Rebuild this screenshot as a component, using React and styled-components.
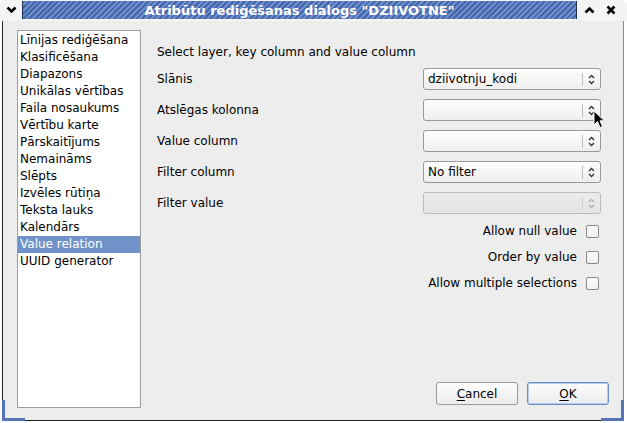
import React from "react";
import styled, { createGlobalStyle } from "styled-components";

const GlobalStyle = createGlobalStyle`
  html, body {
    margin: 0;
    padding: 0;
    background: #ffffff;
  }
  body {
    font-family: "DejaVu Sans", "Noto Sans", sans-serif;
    font-size: 12px;
    color: #000;
  }
`;

const Window = styled.div`
  width: 627px;
  height: 423px;
  display: flex;
  flex-direction: column;
  box-sizing: border-box;
  position: relative;
  overflow: hidden;
`;

const TitleBar = styled.div`
  height: 21px;
  display: flex;
  align-items: stretch;
  background: #f4f4f4;
  border-radius: 5px 5px 0 0;
  padding: 1px 7px 2px 0;
  box-sizing: border-box;
`;

const TitleButton = styled.div`
  width: ${({ $w }) => $w || 22}px;
  display: flex;
  align-items: center;
  justify-content: center;
`;

const Title = styled.div`
  flex: 1;
  display: flex;
  align-items: center;
  justify-content: center;
  color: #fff;
  font-weight: bold;
  font-size: 13px;
  background: repeating-linear-gradient(
    135deg,
    #4466aa 0px,
    #4466aa 2px,
    #6f8fcc 2px,
    #6f8fcc 4px
  );
  border-left: 1px solid #1e2f55;
  border-right: 1px solid #1e2f55;
`;

const Frame = styled.div`
  flex: 1;
  display: flex;
  margin: 0 3px 2px 2px;
  padding: 9px 14px 12px 14px;
  background: #ededed;
  border-left: 1px solid #202020;
  border-right: 1px solid #8c8c8c;
  border-bottom: 1px solid #202020;
  position: relative;

  &::before,
  &::after {
    content: "";
    position: absolute;
    bottom: -1px;
    width: 20px;
    height: 18px;
    border-bottom: 3px solid #5575b8;
  }
  &::before {
    left: -1px;
    border-left: 3px solid #5575b8;
  }
  &::after {
    right: -1px;
    border-right: 3px solid #5575b8;
  }
`;

const ListBox = styled.div`
  width: 124px;
  box-sizing: border-box;
  background: #fff;
  border: 1px solid #9c9c9c;
  padding-top: 1px;
`;

const ListItem = styled.div`
  height: 17px;
  line-height: 17px;
  padding-left: 2px;
  white-space: nowrap;
  background: ${({ $active }) => ($active ? "#7094c9" : "transparent")};
  color: ${({ $active }) => ($active ? "#fff" : "#000")};
`;

const Panel = styled.div`
  flex: 1;
  display: flex;
  flex-direction: column;
  padding: 0 0 3px 16px;
`;

const Form = styled.div`
  display: flex;
  flex-direction: column;
  padding-right: 8px;
`;

const Header = styled.div`
  margin-top: 14px;
  line-height: 17px;
`;

const Grid = styled.div`
  margin-top: 7px;
  display: grid;
  grid-template-columns: 1fr 178px;
  grid-auto-rows: 22px;
  row-gap: 9px;
  align-items: center;
`;

const Label = styled.div`
  color: #000;
`;

const Combo = styled.div`
  position: relative;
  height: 22px;
  box-sizing: border-box;
  display: flex;
  align-items: center;
  border: 1px solid ${({ $disabled }) => ($disabled ? "#bdbdbd" : "#999")};
  border-radius: 3px;
  background: ${({ $disabled }) =>
    $disabled
      ? "linear-gradient(#ececec, #e4e4e4)"
      : "linear-gradient(#fefefe, #eeeeee)"};
`;

const ComboText = styled.div`
  flex: 1;
  padding-left: 4px;
`;

const ComboArrows = styled.div`
  width: 17px;
  height: 13px;
  border-left: 1px solid ${({ $disabled }) => ($disabled ? "#d0d0d0" : "#bdbdbd")};
  display: flex;
  align-items: center;
  justify-content: center;
`;

const Pointer = styled.svg`
  position: absolute;
  left: 169px;
  top: 10px;
`;

const Checks = styled.div`
  margin-top: 4px;
  padding-right: 2px;
  display: flex;
  flex-direction: column;
`;

const CheckRow = styled.div`
  height: 26px;
  display: flex;
  align-items: center;
  justify-content: flex-end;
  gap: 9px;
`;

const CheckBox = styled.div`
  width: 13px;
  height: 13px;
  box-sizing: border-box;
  border: 1px solid #8a8a8a;
  border-radius: 2px;
  background: linear-gradient(#fafafa, #f0f0f0);
`;

const Buttons = styled.div`
  margin-top: auto;
  display: flex;
  justify-content: flex-end;
  gap: 9px;
`;

const Button = styled.div`
  width: 82px;
  height: 23px;
  box-sizing: border-box;
  display: flex;
  align-items: center;
  justify-content: center;
  border-radius: 3px;
  border: 1px solid ${({ $primary }) => ($primary ? "#6d8ec6" : "#9a9a9a")};
  box-shadow: ${({ $primary }) => ($primary ? "inset 0 0 0 1px #b7c9e8" : "none")};
  background: linear-gradient(#fdfdfd, #ececec);

  u {
    text-decoration: underline;
    text-underline-offset: 2px;
  }
`;

const Arrows = ({ color }) => (
  <svg width="7" height="11" viewBox="0 0 7 11">
    <path d="M1 4 L3.5 1.5 L6 4 M1 7 L3.5 9.5 L6 7" fill="none" stroke={color} strokeWidth="1.3" />
  </svg>
);

function ComboBox({ value, disabled, pointer }) {
  const color = disabled ? "#b0b0b0" : "#333";
  return (
    <Combo $disabled={disabled}>
      <ComboText>{value}</ComboText>
      <ComboArrows $disabled={disabled}>
        <Arrows color={color} />
      </ComboArrows>
      {pointer && (
        <Pointer width="13" height="20" viewBox="0 0 13 20">
          <path d="M1 1 L1 15 L4.5 11.5 L7 17.5 L9.5 16.5 L7 10.8 L11.5 10.8 Z" fill="#000" stroke="#fff" strokeWidth="1" />
        </Pointer>
      )}
    </Combo>
  );
}

const items = [
  "Līnijas rediģēšana",
  "Klasificēšana",
  "Diapazons",
  "Unikālas vērtības",
  "Faila nosaukums",
  "Vērtību karte",
  "Pārskaitījums",
  "Nemaināms",
  "Slēpts",
  "Izvēles rūtiņa",
  "Teksta lauks",
  "Kalendārs",
  "Value relation",
  "UUID generator",
];

const fields = [
  { label: "Slānis", value: "dziivotnju_kodi" },
  { label: "Atslēgas kolonna", value: "", pointer: true },
  { label: "Value column", value: "" },
  { label: "Filter column", value: "No filter" },
  { label: "Filter value", value: "", disabled: true },
];

const checks = ["Allow null value", "Order by value", "Allow multiple selections"];

export default function App() {
  return (
    <>
      <GlobalStyle />
      <Window>
        <TitleBar>
          <TitleButton $w={22}>
            <svg width="11" height="8" viewBox="0 0 11 8">
              <path d="M1.5 1.5 L5.5 5.5 L9.5 1.5" fill="none" stroke="#000" strokeWidth="2.6" />
            </svg>
          </TitleButton>
          <Title>Atribūtu rediģēšanas dialogs "DZIIVOTNE"</Title>
          <TitleButton $w={24}>
            <svg width="11" height="8" viewBox="0 0 11 8">
              <path d="M1.5 6.5 L5.5 2.5 L9.5 6.5" fill="none" stroke="#000" strokeWidth="2.6" />
            </svg>
          </TitleButton>
          <TitleButton $w={19}>
            <svg width="10" height="10" viewBox="0 0 10 10">
              <path d="M1.5 1.5 L8.5 8.5 M8.5 1.5 L1.5 8.5" fill="none" stroke="#000" strokeWidth="2.6" />
            </svg>
          </TitleButton>
        </TitleBar>
        <Frame>
          <ListBox>
            {items.map((it) => (
              <ListItem key={it} $active={it === "Value relation"}>
                {it}
              </ListItem>
            ))}
          </ListBox>
          <Panel>
            <Form>
              <Header>Select layer, key column and value column</Header>
              <Grid>
                {fields.map((f) => (
                  <React.Fragment key={f.label}>
                    <Label>{f.label}</Label>
                    <ComboBox value={f.value} disabled={f.disabled} pointer={f.pointer} />
                  </React.Fragment>
                ))}
              </Grid>
              <Checks>
                {checks.map((c) => (
                  <CheckRow key={c}>
                    <span>{c}</span>
                    <CheckBox />
                  </CheckRow>
                ))}
              </Checks>
            </Form>
            <Buttons>
              <Button>
                <span>
                  <u>C</u>ancel
                </span>
              </Button>
              <Button $primary>
                <span>
                  <u>O</u>K
                </span>
              </Button>
            </Buttons>
          </Panel>
        </Frame>
      </Window>
    </>
  );
}
